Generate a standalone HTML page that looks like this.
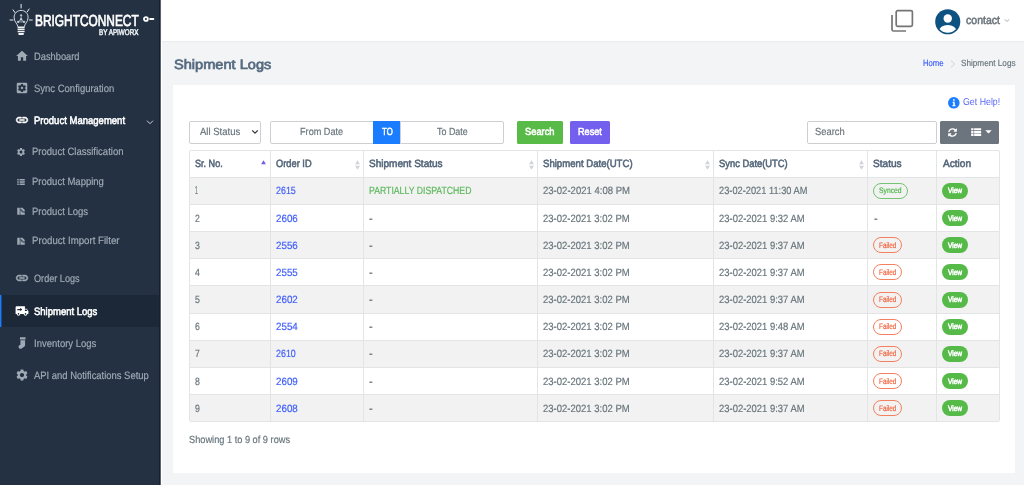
<!DOCTYPE html>
<html lang="en">
<head>
<meta charset="utf-8">
<title>Shipment Logs</title>
<style>
*{box-sizing:border-box;margin:0;padding:0}
html,body{width:1024px;height:485px;overflow:hidden}
body{will-change:transform;font-family:"Liberation Sans", sans-serif;font-size:10.5px;color:#67757c;background:#f3f4f6;position:relative}
a{text-decoration:none;color:inherit}
h1{font-size:inherit;font-weight:inherit}
.t{position:absolute;display:block;line-height:20px;height:20px;white-space:nowrap;transform-origin:0 50%}
.ic{position:absolute;display:block;overflow:visible}
.sbbg{position:absolute;left:0;top:0;width:160px;height:485px;background:#233142}
.sidebar .edge{position:absolute;left:159px;top:0;width:3px;height:485px;background:linear-gradient(90deg,#17212e 0,#17212e 33.300%,#5c636c 33.300%,#5c636c 66.600%,#fff 66.600%)}
.logo .bulb{position:absolute;left:8px;top:3px}
.logo .key{position:absolute;left:142.300px;top:15px}
.activebg{position:absolute;left:0;top:295px;width:159px;height:32px;background:linear-gradient(90deg,#1a7cff 0,#1a7cff 1px,#1c4a8a 1px,#1c4a8a 2px,#1c2838 2px)}
.tbbg{position:absolute;left:162px;top:0;width:862px;height:41px;background:#fff;box-shadow:0 1px 1px #eaecee}
.cardbg{position:absolute;left:173px;top:85px;width:842px;height:388px;background:#fff}
.ctl{position:absolute;top:121px;height:22.500px;border:1px solid #cdcfd2;border-radius:2px;background:#fff}
.btn{position:absolute;top:121px;height:22.500px;border-radius:1.500px}
.tbl{position:absolute;border:1px solid #e2e4e6;border-radius:2px;background:#fff;overflow:hidden}
.tbl .tr{position:absolute;left:-1px;right:-1px;margin-top:-1px;border-top:1px solid #e2e4e6;border-bottom:1px solid #e2e4e6}
.tbl .tr.odd{background:#f2f2f2}
.tbl .vl{position:absolute;top:0;bottom:0;margin-left:-1px;width:1px;background:#e2e4e6}
.pill{position:absolute;height:16px;border:1px solid;border-radius:8px;background:transparent}
.pill.ok{border-color:#74c474}
.pill.bad{border-color:#f5805f}
.view{position:absolute;height:16px;border-radius:8px;background:#55ba48}
</style>
</head>
<body>
<nav class="sidebar">
<div class="sbbg"></div><div class="edge"></div>
<div class="logo">
<svg class="bulb" viewBox="0 0 26 34" width="26" height="34">
<g fill="none" stroke="#e9ecef" stroke-width="1" stroke-linecap="round">
<line x1="13.100" y1="1.300" x2="13.100" y2="5"/><line x1="5.100" y1="6.900" x2="7" y2="9.600"/><line x1="19.200" y1="8.900" x2="21.100" y2="6"/>
<line x1="2" y1="17" x2="5" y2="17"/><line x1="21.400" y1="17" x2="24.300" y2="17"/>
<path stroke-width=".9" d="M9.800 23.300C9.800 21 6.100 19 6.100 14.300C6.100 10.400 9.200 7.400 13.100 7.400C17 7.400 20.100 10.400 20.100 14.300C20.100 19 16.400 21 16.400 23.300"/>
</g>
<path fill="#f1f3f5" d="M9.600 23.400h7v1.500h-7zM9.600 25.600h7v1.500h-7zM9.600 27.800h7v1.500h-7zM10.400 30h5.400v1.200c0 .5-.6.900-1.300.9h-2.800c-.7 0-1.300-.4-1.300-.9z"/>
<g fill="#cfd5db" stroke="#cfd5db" stroke-width=".7"><path fill="none" d="M13.100 12.300v4.100M13.100 16.400l-3 2.500M13.100 16.400l3 2.500M10.100 18.900h6"/><circle cx="13.100" cy="12.300" r=".7"/><circle cx="13.100" cy="16.300" r=".9"/><circle cx="10.100" cy="18.900" r=".8"/><circle cx="16.100" cy="18.900" r=".8"/></g>
</svg>
<span class="t" style="left:35.1px;top:11.1px;font-size:16px;color:#ffffff;-webkit-text-stroke:0.7px currentColor;transform:scaleX(0.743) skewX(.05deg);">BRIGHTCONNECT</span>
<span class="t" style="left:98.9px;top:22.1px;font-size:8.3px;color:#e6e9ed;-webkit-text-stroke:0.55px currentColor;transform:scaleX(0.760) skewX(.05deg);">BY APIWORX</span>
<svg class="key" viewBox="0 0 14 8" width="14" height="8"><circle cx="3.900" cy="4" r="1.950" fill="none" stroke="#fff" stroke-width="1.800"/><rect x="7.100" y="3" width="5.200" height="2.100" rx="1" fill="#fff"/></svg>
</div>
<a class="nav"><svg class="ic" style="left:15.4px;top:49.2px;color:#a0aab5" width="14" height="14" viewBox="0 0 24 24" fill="#a0aab5"><path d="M10 20v-6h4v6h5v-8h3L12 3 2 12h3v8z"/></svg><span class="t" style="left:33.5px;top:46.0px;font-size:10.7px;color:#a0aab5;-webkit-text-stroke:0.18px currentColor;transform:scaleX(0.870) skewX(.05deg);">Dashboard</span></a>
<a class="nav"><svg class="ic" style="left:15.4px;top:81.4px;color:#a0aab5" width="14" height="14" viewBox="0 0 24 24" fill="#a0aab5"><path d="M12 10c-1.100 0-2 .9-2 2s.9 2 2 2 2-.9 2-2-.9-2-2-2zm7-7H5c-1.110 0-2 .9-2 2v14c0 1.100.89 2 2 2h14c1.110 0 2-.9 2-2V5c0-1.100-.89-2-2-2zm-1.750 9c0 .23-.02.46-.05.68l1.480 1.160c.13.11.17.3.08.45l-1.400 2.420c-.09.15-.27.21-.43.15l-1.740-.7c-.36.28-.76.51-1.180.69l-.26 1.850c-.03.17-.18.3-.35.3h-2.800c-.17 0-.32-.13-.35-.29l-.26-1.850c-.43-.18-.82-.41-1.180-.69l-1.740.7c-.16.06-.34 0-.43-.15l-1.400-2.420c-.09-.15-.05-.34.08-.45l1.480-1.160c-.03-.23-.05-.46-.05-.69 0-.23.02-.46.05-.68l-1.480-1.160c-.13-.11-.17-.3-.08-.45l1.400-2.420c.09-.15.27-.21.43-.15l1.740.7c.36-.28.76-.51 1.180-.69l.26-1.850c.03-.17.18-.3.35-.3h2.800c.17 0 .32.13.35.29l.26 1.850c.43.18.82.41 1.180.69l1.740-.7c.16-.06.34 0 .43.15l1.400 2.420c.09.15.05.34-.08.45l-1.480 1.160c.03.23.05.46.05.69z"/></svg><span class="t" style="left:33.5px;top:78.2px;font-size:10.7px;color:#a0aab5;-webkit-text-stroke:0.18px currentColor;transform:scaleX(0.888) skewX(.05deg);">Sync Configuration</span></a>
<a class="nav"><svg class="ic" style="left:15.4px;top:113.4px;color:#ffffff" width="14" height="14" viewBox="0 0 24 24" fill="#ffffff"><path stroke="currentColor" stroke-width="1" d="M3.900 12c0-1.710 1.390-3.100 3.100-3.100h4V7H7c-2.760 0-5 2.240-5 5s2.240 5 5 5h4v-1.900H7c-1.710 0-3.100-1.390-3.100-3.100zM8 13h8v-2H8v2zm9-6h-4v1.900h4c1.710 0 3.100 1.390 3.100 3.100s-1.390 3.100-3.100 3.100h-4V17h4c2.760 0 5-2.240 5-5s-2.240-5-5-5z"/></svg><span class="t" style="left:33.5px;top:110.2px;font-size:10.7px;color:#ffffff;-webkit-text-stroke:0.55px currentColor;transform:scaleX(0.891) skewX(.05deg);">Product Management</span></a>
<svg class="ic" style="left:146px;top:119px" width="8" height="7" viewBox="0 0 8 7"><path d="M1 1.700l3 3 3-3" fill="none" stroke="#cfd5db" stroke-width="1"/></svg>
<a class="nav"><svg class="ic" style="left:15.9px;top:146.6px;color:#a0aab5" width="10" height="10" viewBox="0 0 24 24" fill="#a0aab5"><path d="M19.140 12.940c.04-.3.06-.61.06-.94 0-.32-.02-.64-.07-.94l2.030-1.580c.18-.14.23-.41.12-.61l-1.920-3.320c-.12-.22-.37-.29-.59-.22l-2.390.96c-.5-.38-1.030-.7-1.620-.94l-.36-2.540c-.04-.24-.24-.41-.48-.41h-3.840c-.24 0-.43.17-.47.41l-.36 2.540c-.59.24-1.130.57-1.620.94l-2.390-.96c-.22-.08-.47 0-.59.22L2.740 8.870c-.12.21-.08.47.12.61l2.030 1.580c-.05.3-.09.63-.09.94s.02.64.07.94l-2.030 1.580c-.18.14-.23.41-.12.61l1.920 3.320c.12.22.37.29.59.22l2.390-.96c.5.38 1.030.7 1.620.94l.36 2.540c.05.24.24.41.48.41h3.840c.24 0 .44-.17.47-.41l.36-2.540c.59-.24 1.130-.56 1.620-.94l2.390.96c.22.08.47 0 .59-.22l1.920-3.320c.12-.22.07-.47-.12-.61l-2.010-1.580zM12 15.600c-1.980 0-3.600-1.620-3.600-3.600s1.620-3.600 3.600-3.600 3.600 1.620 3.600 3.600-1.620 3.600-3.600 3.600z"/></svg><span class="t" style="left:32.2px;top:140.9px;font-size:10.7px;color:#a0aab5;-webkit-text-stroke:0.18px currentColor;transform:scaleX(0.890) skewX(.05deg);">Product Classification</span></a>
<a class="nav"><svg class="ic" style="left:15.9px;top:176.6px;color:#a0aab5" width="10" height="10" viewBox="0 0 24 24" fill="#a0aab5"><path d="M3 5h3.500v3.500H3zM8.500 5H21v3.500H8.500zM3 10.250h3.500v3.500H3zM8.500 10.250H21v3.500H8.500zM3 15.500h3.500V19H3zM8.500 15.500H21V19H8.500z"/></svg><span class="t" style="left:32.2px;top:170.9px;font-size:10.7px;color:#a0aab5;-webkit-text-stroke:0.18px currentColor;transform:scaleX(0.890) skewX(.05deg);">Product Mapping</span></a>
<a class="nav"><svg class="ic" style="left:15.9px;top:206.3px;color:#a0aab5" width="10" height="10" viewBox="0 0 24 24" fill="#a0aab5"><path d="M3 4h6v17H3zM10.500 4h5l5.500 5.500V13h-4.500v-2h-2.500V8.500h-3.500zM10.500 10h2v3h3v2.500h5.500V21H10.500z"/></svg><span class="t" style="left:32.2px;top:200.6px;font-size:10.7px;color:#a0aab5;-webkit-text-stroke:0.18px currentColor;transform:scaleX(0.891) skewX(.05deg);">Product Logs</span></a>
<a class="nav"><svg class="ic" style="left:15.9px;top:236.0px;color:#a0aab5" width="10" height="10" viewBox="0 0 24 24" fill="#a0aab5"><path d="M3 4h6v17H3zM10.500 4h5l5.500 5.500V13h-4.500v-2h-2.500V8.500h-3.500zM10.500 10h2v3h3v2.500h5.500V21H10.500z"/></svg><span class="t" style="left:32.2px;top:230.3px;font-size:10.7px;color:#a0aab5;-webkit-text-stroke:0.18px currentColor;transform:scaleX(0.904) skewX(.05deg);">Product Import Filter</span></a>
<div class="activebg"></div>
<a class="nav"><svg class="ic" style="left:15.4px;top:271.2px;color:#a0aab5" width="14" height="14" viewBox="0 0 24 24" fill="#a0aab5"><path stroke="currentColor" stroke-width="1" d="M3.900 12c0-1.710 1.390-3.100 3.100-3.100h4V7H7c-2.760 0-5 2.240-5 5s2.240 5 5 5h4v-1.900H7c-1.710 0-3.100-1.390-3.100-3.100zM8 13h8v-2H8v2zm9-6h-4v1.900h4c1.710 0 3.100 1.390 3.100 3.100s-1.390 3.100-3.100 3.100h-4V17h4c2.760 0 5-2.240 5-5s-2.240-5-5-5z"/></svg><span class="t" style="left:33.5px;top:268.0px;font-size:10.7px;color:#a0aab5;-webkit-text-stroke:0.18px currentColor;transform:scaleX(0.853) skewX(.05deg);">Order Logs</span></a>
<a class="nav"><svg class="ic" style="left:15.4px;top:303.7px;color:#ffffff" width="14" height="14" viewBox="0 0 24 24" fill="#ffffff"><path d="M20 8h-3V4H3c-1.100 0-2 .9-2 2v11h2c0 1.660 1.340 3 3 3s3-1.340 3-3h6c0 1.660 1.340 3 3 3s3-1.340 3-3h2v-5l-3-4zM6 18.500c-.83 0-1.500-.67-1.500-1.500s.67-1.500 1.500-1.500 1.500.67 1.500 1.500-.67 1.500-1.500 1.500zm13.500-9l1.960 2.500H17V9.500h2.500zm-1.500 9c-.83 0-1.500-.67-1.500-1.500s.67-1.500 1.500-1.500 1.500.67 1.500 1.500-.67 1.500-1.500 1.500zM4 8.500h5v-2l3.500 3-3.500 3v-2H4z" fill-rule="evenodd"/></svg><span class="t" style="left:33.5px;top:300.5px;font-size:10.7px;color:#ffffff;-webkit-text-stroke:0.55px currentColor;transform:scaleX(0.888) skewX(.05deg);">Shipment Logs</span></a>
<a class="nav"><svg class="ic" style="left:15.4px;top:335.8px;color:#a0aab5" width="14" height="14" viewBox="0 0 24 24" fill="#a0aab5"><path d="M8.500 2h9.500v4.200H8.500zM9.300 7.200h8v8.300c0 1.200-.6 2.300-1.600 3l-4.400 3c-1.500 1-3.600.6-4.600-.9s-.6-3.600.9-4.600l1.700-1.200z"/></svg><span class="t" style="left:33.5px;top:332.6px;font-size:10.7px;color:#a0aab5;-webkit-text-stroke:0.18px currentColor;transform:scaleX(0.889) skewX(.05deg);">Inventory Logs</span></a>
<a class="nav"><svg class="ic" style="left:15.4px;top:368.0px;color:#a0aab5" width="14" height="14" viewBox="0 0 24 24" fill="#a0aab5"><path d="M19.140 12.940c.04-.3.06-.61.06-.94 0-.32-.02-.64-.07-.94l2.030-1.580c.18-.14.23-.41.12-.61l-1.920-3.320c-.12-.22-.37-.29-.59-.22l-2.390.96c-.5-.38-1.030-.7-1.620-.94l-.36-2.540c-.04-.24-.24-.41-.48-.41h-3.840c-.24 0-.43.17-.47.41l-.36 2.540c-.59.24-1.130.57-1.620.94l-2.390-.96c-.22-.08-.47 0-.59.22L2.740 8.870c-.12.21-.08.47.12.61l2.030 1.580c-.05.3-.09.63-.09.94s.02.64.07.94l-2.030 1.580c-.18.14-.23.41-.12.61l1.920 3.320c.12.22.37.29.59.22l2.390-.96c.5.38 1.030.7 1.620.94l.36 2.540c.05.24.24.41.48.41h3.840c.24 0 .44-.17.47-.41l.36-2.540c.59-.24 1.130-.56 1.620-.94l2.390.96c.22.08.47 0 .59-.22l1.920-3.320c.12-.22.07-.47-.12-.61l-2.010-1.580zM12 15.600c-1.980 0-3.600-1.620-3.600-3.600s1.620-3.600 3.600-3.600 3.600 1.620 3.600 3.600-1.620 3.600-3.600 3.600z"/></svg><span class="t" style="left:33.5px;top:364.8px;font-size:10.7px;color:#a0aab5;-webkit-text-stroke:0.18px currentColor;transform:scaleX(0.882) skewX(.05deg);">API and Notifications Setup</span></a>
</nav>
<header class="topbar"><div class="tbbg"></div>
<svg class="ic" style="left:890px;top:9px" width="24" height="23" viewBox="0 0 24 23"><rect x="6.200" y="1.600" width="16.200" height="15.700" rx="1.500" fill="none" stroke="#757575" stroke-width="1.700"/><path d="M2 6v14.500c0 .8.700 1.500 1.500 1.500H16" fill="none" stroke="#757575" stroke-width="1.700"/></svg>
<svg class="ic" style="left:935px;top:8.500px" width="25.500" height="25.500" viewBox="0 0 26 26"><defs><clipPath id="av"><circle cx="13" cy="13" r="11.200"/></clipPath></defs><circle cx="13" cy="13" r="12.800" fill="#0d5280"/><g clip-path="url(#av)" fill="#fff"><circle cx="13" cy="9.600" r="4.300"/><ellipse cx="13" cy="23" rx="9" ry="6.800"/></g></svg>
<span class="t" style="left:966.1px;top:10.1px;font-size:11.5px;color:#6c757d;-webkit-text-stroke:0.55px currentColor;transform:scaleX(0.917) skewX(.05deg);">contact</span>
<svg class="ic" style="left:1004px;top:18px" width="6" height="5" viewBox="0 0 6 5"><path d="M.8 1.300l2.200 2.200 2.200-2.200" fill="none" stroke="#9aa0a6" stroke-width=".9"/></svg>
</header>
<main class="main">
<h1><span class="t" style="left:173.8px;top:54.6px;font-size:13.5px;color:#566a80;-webkit-text-stroke:0.7px currentColor;transform:scaleX(1.081) skewX(.05deg);">Shipment Logs</span></h1>
<div class="crumb"><span class="t" style="left:922.6px;top:53.0px;font-size:9px;color:#3f5efb;-webkit-text-stroke:0.18px currentColor;transform:scaleX(0.858) skewX(.05deg);">Home</span><svg class="ic" style="left:949.500px;top:59.500px" width="6" height="8" viewBox="0 0 6 8"><path d="M1 .8l3.600 3.200L1 7.200" fill="none" stroke="#c3c8ce" stroke-width=".8"/></svg><span class="t" style="left:960.8px;top:53.0px;font-size:9px;color:#67757c;-webkit-text-stroke:0.18px currentColor;transform:scaleX(0.908) skewX(.05deg);">Shipment Logs</span></div>
<section class="card"><div class="cardbg"></div>
<svg class="ic" style="left:947.800px;top:96.500px" width="11.600" height="11.600" viewBox="0 0 12 12"><circle cx="6" cy="6" r="6" fill="#1a7cff"/><path d="M5.200 2.300h1.700v1.700H5.200zM4.700 5h2.300v3.600h.8v1H4.500v-1h.9V6h-.7z" fill="#fff"/></svg>
<span class="t" style="left:962.6px;top:91.8px;font-size:10px;color:#5a68fb;transform:scaleX(0.880) skewX(.05deg);">Get Help!</span>
<div class="ctl" style="left:189px;width:72px"></div>
<span class="t" style="left:200.1px;top:122.2px;font-size:10.3px;color:#67757c;-webkit-text-stroke:0.18px currentColor;transform:scaleX(0.924) skewX(.05deg);">All Status</span>
<svg class="ic" style="left:250.500px;top:129px" width="8" height="6" viewBox="0 0 8 6"><path d="M1.200 1.400l2.800 2.800 2.800-2.800" fill="none" stroke="#343a40" stroke-width="1.300"/></svg>
<div class="ctl" style="left:270px;width:104px;border-radius:2px 0 0 2px"></div>
<span class="t" style="left:300.4px;top:122.2px;font-size:10.3px;color:#67757c;-webkit-text-stroke:0.18px currentColor;transform:scaleX(0.888) skewX(.05deg);">From Date</span>
<div class="btn" style="left:373px;width:27px;background:#1a7cff;border-radius:0"></div>
<span class="t" style="left:381.7px;top:122.2px;font-size:10.3px;color:#ffffff;-webkit-text-stroke:0.55px currentColor;transform:scaleX(0.758) skewX(.05deg);">TO</span>
<div class="ctl" style="left:400px;width:104px;border-radius:0 2px 2px 0"></div>
<span class="t" style="left:436.8px;top:122.2px;font-size:10.3px;color:#67757c;-webkit-text-stroke:0.18px currentColor;transform:scaleX(0.865) skewX(.05deg);">To Date</span>
<div class="btn" style="left:516.500px;width:46.700px;background:#58bb48"></div>
<span class="t" style="left:524.9px;top:122.2px;font-size:10.3px;color:#ffffff;-webkit-text-stroke:0.55px currentColor;transform:scaleX(0.904) skewX(.05deg);">Search</span>
<div class="btn" style="left:569.600px;width:40.600px;background:#7460ee"></div>
<span class="t" style="left:578.0px;top:122.2px;font-size:10.3px;color:#ffffff;-webkit-text-stroke:0.55px currentColor;transform:scaleX(0.885) skewX(.05deg);">Reset</span>
<div class="ctl" style="left:807px;width:130px"></div>
<span class="t" style="left:815.0px;top:122.2px;font-size:10.3px;color:#6c757d;-webkit-text-stroke:0.18px currentColor;transform:scaleX(0.910) skewX(.05deg);">Search</span>
<div class="btn" style="left:940px;width:59.300px;background:#6c757d"></div>
<svg class="ic" style="left:947.500px;top:127.800px" width="9" height="9" viewBox="0 0 512 512"><path fill="#fff" d="M370.720 133.280C339.458 104.008 298.888 87.962 255.848 88c-77.458.068-144.328 53.178-162.791 126.850-1.344 5.363-6.122 9.150-11.651 9.150H24.103c-7.498 0-13.194-6.807-11.807-14.176C33.933 94.924 134.813 8 256 8c66.448 0 126.791 26.136 171.315 68.685L463.030 40.970C478.149 25.851 504 36.559 504 57.941V192c0 13.255-10.745 24-24 24H345.941c-21.382 0-32.090-25.851-16.971-40.971l41.750-41.749zM32 296h134.059c21.382 0 32.090 25.851 16.971 40.971l-41.750 41.750c31.262 29.273 71.835 45.319 114.876 45.280 77.418-.07 144.315-53.144 162.787-126.849 1.344-5.363 6.122-9.150 11.651-9.150h57.304c7.498 0 13.194 6.807 11.807 14.176C478.067 417.076 377.187 504 256 504c-66.448 0-126.791-26.136-171.315-68.685L48.970 471.030C33.851 486.149 8 475.441 8 454.059V320c0-13.255 10.745-24 24-24z"/></svg>
<svg class="ic" style="left:971.200px;top:127.700px" width="10.300" height="8.200" viewBox="0 0 11 9"><path fill="#fff" d="M0 .3h2.600v2.300H0zM3.300.3H11v2.300H3.300zM0 3.350h2.600v2.300H0zM3.300 3.350H11v2.300H3.300zM0 6.400h2.600v2.300H0zM3.300 6.400H11v2.300H3.300z"/></svg>
<svg class="ic" style="left:985px;top:130px" width="7" height="4" viewBox="0 0 7 4"><path fill="#fff" d="M.3.300h6.400L3.500 3.500z"/></svg>
<div class="tbl" style="left:189px;top:150px;width:811px;height:272px">
<div class="tr head" style="top:0px;height:28px"></div>
<div class="tr odd" style="top:27px;height:28px"></div>
<div class="tr" style="top:54px;height:28px"></div>
<div class="tr odd" style="top:81px;height:28px"></div>
<div class="tr" style="top:108px;height:28px"></div>
<div class="tr odd" style="top:135px;height:29px"></div>
<div class="tr" style="top:163px;height:28px"></div>
<div class="tr odd" style="top:190px;height:28px"></div>
<div class="tr" style="top:217px;height:28px"></div>
<div class="tr odd" style="top:244px;height:28px"></div>
<div class="vl" style="left:81px"></div>
<div class="vl" style="left:174px"></div>
<div class="vl" style="left:348px"></div>
<div class="vl" style="left:524px"></div>
<div class="vl" style="left:678px"></div>
<div class="vl" style="left:747px"></div>
</div>
<span class="t" style="left:194.7px;top:153.3px;font-size:10.5px;color:#54667a;-webkit-text-stroke:0.55px currentColor;transform:scaleX(0.863) skewX(.05deg);">Sr. No.</span>
<svg class="ic" style="left:261px;top:159.8px" width="5" height="10" viewBox="0 0 5 10"><path d="M2.500 .3L4.900 4.300H.1z" fill="#6f5ce7"/></svg>
<span class="t" style="left:275.7px;top:153.3px;font-size:10.5px;color:#54667a;-webkit-text-stroke:0.55px currentColor;transform:scaleX(0.884) skewX(.05deg);">Order ID</span>
<svg class="ic" style="left:354.6px;top:159.9px" width="5" height="10" viewBox="0 0 5 10"><path d="M2.500 .3L4.900 4.300H.1z" fill="#d0d4d8"/><path d="M2.500 9.700L4.900 5.700H.1z" fill="#d0d4d8"/></svg>
<span class="t" style="left:369.0px;top:153.3px;font-size:10.5px;color:#54667a;-webkit-text-stroke:0.55px currentColor;transform:scaleX(0.955) skewX(.05deg);">Shipment Status</span>
<svg class="ic" style="left:528.6px;top:159.9px" width="5" height="10" viewBox="0 0 5 10"><path d="M2.500 .3L4.900 4.300H.1z" fill="#d0d4d8"/><path d="M2.500 9.700L4.900 5.700H.1z" fill="#d0d4d8"/></svg>
<span class="t" style="left:543.0px;top:153.3px;font-size:10.5px;color:#54667a;-webkit-text-stroke:0.55px currentColor;transform:scaleX(0.914) skewX(.05deg);">Shipment Date(UTC)</span>
<svg class="ic" style="left:704.6px;top:159.9px" width="5" height="10" viewBox="0 0 5 10"><path d="M2.500 .3L4.900 4.300H.1z" fill="#d0d4d8"/><path d="M2.500 9.700L4.900 5.700H.1z" fill="#d0d4d8"/></svg>
<span class="t" style="left:719.4px;top:153.3px;font-size:10.5px;color:#54667a;-webkit-text-stroke:0.55px currentColor;transform:scaleX(0.892) skewX(.05deg);">Sync Date(UTC)</span>
<svg class="ic" style="left:858.7px;top:159.9px" width="5" height="10" viewBox="0 0 5 10"><path d="M2.500 .3L4.900 4.300H.1z" fill="#d0d4d8"/><path d="M2.500 9.700L4.900 5.700H.1z" fill="#d0d4d8"/></svg>
<span class="t" style="left:873.4px;top:153.3px;font-size:10.5px;color:#54667a;-webkit-text-stroke:0.55px currentColor;transform:scaleX(0.960) skewX(.05deg);">Status</span>
<span class="t" style="left:942.8px;top:153.3px;font-size:10.5px;color:#54667a;-webkit-text-stroke:0.55px currentColor;transform:scaleX(0.963) skewX(.05deg);">Action</span>
<span class="t" style="left:195.0px;top:180.4px;font-size:10.5px;color:#67757c;-webkit-text-stroke:0.18px currentColor;transform:scaleX(0.488) skewX(.05deg);">1</span>
<span class="t" style="left:275.7px;top:180.4px;font-size:10.5px;color:#3f5efb;-webkit-text-stroke:0.18px currentColor;transform:scaleX(0.848) skewX(.05deg);">2615</span>
<span class="t" style="left:368.9px;top:180.4px;font-size:10.5px;color:#5cb85c;-webkit-text-stroke:0.18px currentColor;transform:scaleX(0.828) skewX(.05deg);">PARTIALLY DISPATCHED</span>
<span class="t" style="left:543.0px;top:180.4px;font-size:10.5px;color:#67757c;-webkit-text-stroke:0.18px currentColor;transform:scaleX(0.909) skewX(.05deg);">23-02-2021 4:08 PM</span>
<span class="t" style="left:719.4px;top:180.4px;font-size:10.5px;color:#67757c;-webkit-text-stroke:0.18px currentColor;transform:scaleX(0.882) skewX(.05deg);">23-02-2021 11:30 AM</span>
<span class="pill ok" style="left:872.800px;top:182.9px;width:35px"></span>
<span class="t" style="left:879.0px;top:181.4px;font-size:8px;color:#4cb648;-webkit-text-stroke:0.18px currentColor;transform:scaleX(0.847) skewX(.05deg);">Synced</span>
<span class="view" style="left:942.200px;top:182.9px;width:26px"></span>
<span class="t" style="left:948.4px;top:181.4px;font-size:7.8px;color:#ffffff;-webkit-text-stroke:0.55px currentColor;transform:scaleX(0.841) skewX(.05deg);">View</span>
<span class="t" style="left:195.0px;top:207.6px;font-size:10.5px;color:#67757c;-webkit-text-stroke:0.18px currentColor;transform:scaleX(0.830) skewX(.05deg);">2</span>
<span class="t" style="left:275.7px;top:207.6px;font-size:10.5px;color:#3f5efb;-webkit-text-stroke:0.18px currentColor;transform:scaleX(0.933) skewX(.05deg);">2606</span>
<span class="t" style="left:369.3px;top:207.6px;font-size:10.5px;color:#67757c;-webkit-text-stroke:0.18px currentColor;transform:scaleX(1.057) skewX(.05deg);">-</span>
<span class="t" style="left:543.0px;top:207.6px;font-size:10.5px;color:#67757c;-webkit-text-stroke:0.18px currentColor;transform:scaleX(0.905) skewX(.05deg);">23-02-2021 3:02 PM</span>
<span class="t" style="left:719.4px;top:207.6px;font-size:10.5px;color:#67757c;-webkit-text-stroke:0.18px currentColor;transform:scaleX(0.900) skewX(.05deg);">23-02-2021 9:32 AM</span>
<span class="t" style="left:873.6px;top:207.6px;font-size:10.5px;color:#67757c;-webkit-text-stroke:0.18px currentColor;transform:scaleX(1.057) skewX(.05deg);">-</span>
<span class="view" style="left:942.200px;top:210.1px;width:26px"></span>
<span class="t" style="left:948.4px;top:208.6px;font-size:7.8px;color:#ffffff;-webkit-text-stroke:0.55px currentColor;transform:scaleX(0.841) skewX(.05deg);">View</span>
<span class="t" style="left:195.0px;top:234.7px;font-size:10.5px;color:#67757c;-webkit-text-stroke:0.18px currentColor;transform:scaleX(0.830) skewX(.05deg);">3</span>
<span class="t" style="left:275.7px;top:234.7px;font-size:10.5px;color:#3f5efb;-webkit-text-stroke:0.18px currentColor;transform:scaleX(0.933) skewX(.05deg);">2556</span>
<span class="t" style="left:369.3px;top:234.7px;font-size:10.5px;color:#67757c;-webkit-text-stroke:0.18px currentColor;transform:scaleX(1.057) skewX(.05deg);">-</span>
<span class="t" style="left:543.0px;top:234.7px;font-size:10.5px;color:#67757c;-webkit-text-stroke:0.18px currentColor;transform:scaleX(0.905) skewX(.05deg);">23-02-2021 3:02 PM</span>
<span class="t" style="left:719.4px;top:234.7px;font-size:10.5px;color:#67757c;-webkit-text-stroke:0.18px currentColor;transform:scaleX(0.900) skewX(.05deg);">23-02-2021 9:37 AM</span>
<span class="pill bad" style="left:873.300px;top:237.2px;width:29px"></span>
<span class="t" style="left:879.2px;top:235.7px;font-size:8px;color:#f4623a;-webkit-text-stroke:0.18px currentColor;transform:scaleX(0.798) skewX(.05deg);">Failed</span>
<span class="view" style="left:942.200px;top:237.2px;width:26px"></span>
<span class="t" style="left:948.4px;top:235.7px;font-size:7.8px;color:#ffffff;-webkit-text-stroke:0.55px currentColor;transform:scaleX(0.841) skewX(.05deg);">View</span>
<span class="t" style="left:195.0px;top:261.9px;font-size:10.5px;color:#67757c;-webkit-text-stroke:0.18px currentColor;transform:scaleX(0.830) skewX(.05deg);">4</span>
<span class="t" style="left:275.7px;top:261.9px;font-size:10.5px;color:#3f5efb;-webkit-text-stroke:0.18px currentColor;transform:scaleX(0.933) skewX(.05deg);">2555</span>
<span class="t" style="left:369.3px;top:261.9px;font-size:10.5px;color:#67757c;-webkit-text-stroke:0.18px currentColor;transform:scaleX(1.057) skewX(.05deg);">-</span>
<span class="t" style="left:543.0px;top:261.9px;font-size:10.5px;color:#67757c;-webkit-text-stroke:0.18px currentColor;transform:scaleX(0.905) skewX(.05deg);">23-02-2021 3:02 PM</span>
<span class="t" style="left:719.4px;top:261.9px;font-size:10.5px;color:#67757c;-webkit-text-stroke:0.18px currentColor;transform:scaleX(0.900) skewX(.05deg);">23-02-2021 9:37 AM</span>
<span class="pill bad" style="left:873.300px;top:264.4px;width:29px"></span>
<span class="t" style="left:879.2px;top:262.9px;font-size:8px;color:#f4623a;-webkit-text-stroke:0.18px currentColor;transform:scaleX(0.798) skewX(.05deg);">Failed</span>
<span class="view" style="left:942.200px;top:264.4px;width:26px"></span>
<span class="t" style="left:948.4px;top:262.9px;font-size:7.8px;color:#ffffff;-webkit-text-stroke:0.55px currentColor;transform:scaleX(0.841) skewX(.05deg);">View</span>
<span class="t" style="left:195.0px;top:289.0px;font-size:10.5px;color:#67757c;-webkit-text-stroke:0.18px currentColor;transform:scaleX(0.830) skewX(.05deg);">5</span>
<span class="t" style="left:275.7px;top:289.0px;font-size:10.5px;color:#3f5efb;-webkit-text-stroke:0.18px currentColor;transform:scaleX(0.933) skewX(.05deg);">2602</span>
<span class="t" style="left:369.3px;top:289.0px;font-size:10.5px;color:#67757c;-webkit-text-stroke:0.18px currentColor;transform:scaleX(1.057) skewX(.05deg);">-</span>
<span class="t" style="left:543.0px;top:289.0px;font-size:10.5px;color:#67757c;-webkit-text-stroke:0.18px currentColor;transform:scaleX(0.905) skewX(.05deg);">23-02-2021 3:02 PM</span>
<span class="t" style="left:719.4px;top:289.0px;font-size:10.5px;color:#67757c;-webkit-text-stroke:0.18px currentColor;transform:scaleX(0.900) skewX(.05deg);">23-02-2021 9:37 AM</span>
<span class="pill bad" style="left:873.300px;top:291.5px;width:29px"></span>
<span class="t" style="left:879.2px;top:290.0px;font-size:8px;color:#f4623a;-webkit-text-stroke:0.18px currentColor;transform:scaleX(0.798) skewX(.05deg);">Failed</span>
<span class="view" style="left:942.200px;top:291.5px;width:26px"></span>
<span class="t" style="left:948.4px;top:290.0px;font-size:7.8px;color:#ffffff;-webkit-text-stroke:0.55px currentColor;transform:scaleX(0.841) skewX(.05deg);">View</span>
<span class="t" style="left:195.0px;top:316.2px;font-size:10.5px;color:#67757c;-webkit-text-stroke:0.18px currentColor;transform:scaleX(0.830) skewX(.05deg);">6</span>
<span class="t" style="left:275.7px;top:316.2px;font-size:10.5px;color:#3f5efb;-webkit-text-stroke:0.18px currentColor;transform:scaleX(0.933) skewX(.05deg);">2554</span>
<span class="t" style="left:369.3px;top:316.2px;font-size:10.5px;color:#67757c;-webkit-text-stroke:0.18px currentColor;transform:scaleX(1.057) skewX(.05deg);">-</span>
<span class="t" style="left:543.0px;top:316.2px;font-size:10.5px;color:#67757c;-webkit-text-stroke:0.18px currentColor;transform:scaleX(0.905) skewX(.05deg);">23-02-2021 3:02 PM</span>
<span class="t" style="left:719.4px;top:316.2px;font-size:10.5px;color:#67757c;-webkit-text-stroke:0.18px currentColor;transform:scaleX(0.900) skewX(.05deg);">23-02-2021 9:48 AM</span>
<span class="pill bad" style="left:873.300px;top:318.7px;width:29px"></span>
<span class="t" style="left:879.2px;top:317.2px;font-size:8px;color:#f4623a;-webkit-text-stroke:0.18px currentColor;transform:scaleX(0.798) skewX(.05deg);">Failed</span>
<span class="view" style="left:942.200px;top:318.7px;width:26px"></span>
<span class="t" style="left:948.4px;top:317.2px;font-size:7.8px;color:#ffffff;-webkit-text-stroke:0.55px currentColor;transform:scaleX(0.841) skewX(.05deg);">View</span>
<span class="t" style="left:195.0px;top:343.3px;font-size:10.5px;color:#67757c;-webkit-text-stroke:0.18px currentColor;transform:scaleX(0.830) skewX(.05deg);">7</span>
<span class="t" style="left:275.7px;top:343.3px;font-size:10.5px;color:#3f5efb;-webkit-text-stroke:0.18px currentColor;transform:scaleX(0.848) skewX(.05deg);">2610</span>
<span class="t" style="left:369.3px;top:343.3px;font-size:10.5px;color:#67757c;-webkit-text-stroke:0.18px currentColor;transform:scaleX(1.057) skewX(.05deg);">-</span>
<span class="t" style="left:543.0px;top:343.3px;font-size:10.5px;color:#67757c;-webkit-text-stroke:0.18px currentColor;transform:scaleX(0.905) skewX(.05deg);">23-02-2021 3:02 PM</span>
<span class="t" style="left:719.4px;top:343.3px;font-size:10.5px;color:#67757c;-webkit-text-stroke:0.18px currentColor;transform:scaleX(0.900) skewX(.05deg);">23-02-2021 9:37 AM</span>
<span class="pill bad" style="left:873.300px;top:345.8px;width:29px"></span>
<span class="t" style="left:879.2px;top:344.3px;font-size:8px;color:#f4623a;-webkit-text-stroke:0.18px currentColor;transform:scaleX(0.798) skewX(.05deg);">Failed</span>
<span class="view" style="left:942.200px;top:345.8px;width:26px"></span>
<span class="t" style="left:948.4px;top:344.3px;font-size:7.8px;color:#ffffff;-webkit-text-stroke:0.55px currentColor;transform:scaleX(0.841) skewX(.05deg);">View</span>
<span class="t" style="left:195.0px;top:370.5px;font-size:10.5px;color:#67757c;-webkit-text-stroke:0.18px currentColor;transform:scaleX(0.830) skewX(.05deg);">8</span>
<span class="t" style="left:275.7px;top:370.5px;font-size:10.5px;color:#3f5efb;-webkit-text-stroke:0.18px currentColor;transform:scaleX(0.933) skewX(.05deg);">2609</span>
<span class="t" style="left:369.3px;top:370.5px;font-size:10.5px;color:#67757c;-webkit-text-stroke:0.18px currentColor;transform:scaleX(1.057) skewX(.05deg);">-</span>
<span class="t" style="left:543.0px;top:370.5px;font-size:10.5px;color:#67757c;-webkit-text-stroke:0.18px currentColor;transform:scaleX(0.905) skewX(.05deg);">23-02-2021 3:02 PM</span>
<span class="t" style="left:719.4px;top:370.5px;font-size:10.5px;color:#67757c;-webkit-text-stroke:0.18px currentColor;transform:scaleX(0.900) skewX(.05deg);">23-02-2021 9:52 AM</span>
<span class="pill bad" style="left:873.300px;top:373.0px;width:29px"></span>
<span class="t" style="left:879.2px;top:371.5px;font-size:8px;color:#f4623a;-webkit-text-stroke:0.18px currentColor;transform:scaleX(0.798) skewX(.05deg);">Failed</span>
<span class="view" style="left:942.200px;top:373.0px;width:26px"></span>
<span class="t" style="left:948.4px;top:371.5px;font-size:7.8px;color:#ffffff;-webkit-text-stroke:0.55px currentColor;transform:scaleX(0.841) skewX(.05deg);">View</span>
<span class="t" style="left:195.0px;top:397.6px;font-size:10.5px;color:#67757c;-webkit-text-stroke:0.18px currentColor;transform:scaleX(0.830) skewX(.05deg);">9</span>
<span class="t" style="left:275.7px;top:397.6px;font-size:10.5px;color:#3f5efb;-webkit-text-stroke:0.18px currentColor;transform:scaleX(0.933) skewX(.05deg);">2608</span>
<span class="t" style="left:369.3px;top:397.6px;font-size:10.5px;color:#67757c;-webkit-text-stroke:0.18px currentColor;transform:scaleX(1.057) skewX(.05deg);">-</span>
<span class="t" style="left:543.0px;top:397.6px;font-size:10.5px;color:#67757c;-webkit-text-stroke:0.18px currentColor;transform:scaleX(0.905) skewX(.05deg);">23-02-2021 3:02 PM</span>
<span class="t" style="left:719.4px;top:397.6px;font-size:10.5px;color:#67757c;-webkit-text-stroke:0.18px currentColor;transform:scaleX(0.900) skewX(.05deg);">23-02-2021 9:37 AM</span>
<span class="pill bad" style="left:873.300px;top:400.1px;width:29px"></span>
<span class="t" style="left:879.2px;top:398.6px;font-size:8px;color:#f4623a;-webkit-text-stroke:0.18px currentColor;transform:scaleX(0.798) skewX(.05deg);">Failed</span>
<span class="view" style="left:942.200px;top:400.1px;width:26px"></span>
<span class="t" style="left:948.4px;top:398.6px;font-size:7.8px;color:#ffffff;-webkit-text-stroke:0.55px currentColor;transform:scaleX(0.841) skewX(.05deg);">View</span>
<span class="t" style="left:189.2px;top:430.0px;font-size:10.3px;color:#67757c;-webkit-text-stroke:0.18px currentColor;transform:scaleX(0.896) skewX(.05deg);">Showing 1 to 9 of 9 rows</span>
</section></main>
</body>
</html>
